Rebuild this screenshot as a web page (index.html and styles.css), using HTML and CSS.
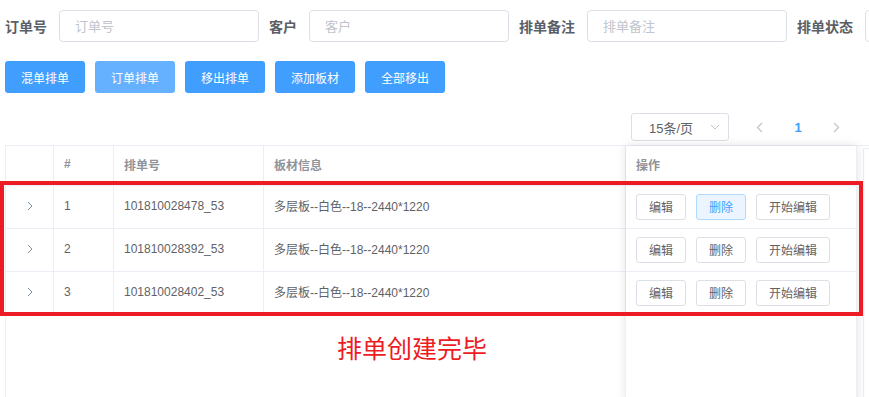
FILE: index.html
```html
<!DOCTYPE html>
<html>
<head>
    <title>排单管理</title>
    <link rel="stylesheet" href="styles.css">
</head>
<body>
    <div class="page">
        <div class="filter-bar">
            <div class="filter-item">
                <label>订单号</label>
                <input class="filter-input" type="text" placeholder="订单号">
            </div>
            <div class="filter-item">
                <label>客户</label>
                <input class="filter-input" type="text" placeholder="客户">
            </div>
            <div class="filter-item">
                <label>排单备注</label>
                <input class="filter-input" type="text" placeholder="排单备注">
            </div>
            <div class="filter-item">
                <label>排单状态</label>
                <input class="filter-input" type="text" placeholder="请选择">
            </div>
        </div>

        <div class="actions">
            <button class="button">混单排单</button>
            <button class="button button-hover">订单排单</button>
            <button class="button">移出排单</button>
            <button class="button">添加板材</button>
            <button class="button">全部移出</button>
        </div>

        <div class="pager-bar">
            <div class="page-size">
                <span>15条/页</span>
                <svg width="10" height="6" viewBox="0 0 10 6"><polyline points="1,1 5,5 9,1" fill="none" stroke="#c0c4cc" stroke-width="1"/></svg>
            </div>
            <button class="pager-btn">
                <svg width="7" height="11" viewBox="0 0 7 11"><polyline points="6,1 1.5,5.5 6,10" fill="none" stroke="#c0c4cc" stroke-width="1.3"/></svg>
            </button>
            <span class="pager-num">1</span>
            <button class="pager-btn">
                <svg width="7" height="11" viewBox="0 0 7 11"><polyline points="1,1 5.5,5.5 1,10" fill="none" stroke="#c0c4cc" stroke-width="1.3"/></svg>
            </button>
        </div>

        <div class="table">
            <div class="table-main">
                <div class="row head-row">
                    <div class="cell"></div>
                    <div class="cell">#</div>
                    <div class="cell">排单号</div>
                    <div class="cell">板材信息</div>
                </div>
                <div class="row">
                    <div class="cell expand"><svg width="6" height="10" viewBox="0 0 6 10"><polyline points="1,1 5,5 1,9" fill="none" stroke="#7b8fa3" stroke-width="1"/></svg></div>
                    <div class="cell">1</div>
                    <div class="cell">101810028478_53</div>
                    <div class="cell">多层板--白色--18--2440*1220</div>
                </div>
                <div class="row">
                    <div class="cell expand"><svg width="6" height="10" viewBox="0 0 6 10"><polyline points="1,1 5,5 1,9" fill="none" stroke="#9a8a8a" stroke-width="1"/></svg></div>
                    <div class="cell">2</div>
                    <div class="cell">101810028392_53</div>
                    <div class="cell">多层板--白色--18--2440*1220</div>
                </div>
                <div class="row">
                    <div class="cell expand"><svg width="6" height="10" viewBox="0 0 6 10"><polyline points="1,1 5,5 1,9" fill="none" stroke="#7b8fa3" stroke-width="1"/></svg></div>
                    <div class="cell">3</div>
                    <div class="cell">101810028402_53</div>
                    <div class="cell">多层板--白色--18--2440*1220</div>
                </div>
            </div>

            <div class="table-fixed">
                <div class="fixed-cell head-row">操作</div>
                <div class="fixed-cell">
                    <button class="mini-btn">编辑</button>
                    <button class="mini-btn mini-active">删除</button>
                    <button class="mini-btn">开始编辑</button>
                </div>
                <div class="fixed-cell">
                    <button class="mini-btn">编辑</button>
                    <button class="mini-btn">删除</button>
                    <button class="mini-btn">开始编辑</button>
                </div>
                <div class="fixed-cell">
                    <button class="mini-btn">编辑</button>
                    <button class="mini-btn">删除</button>
                    <button class="mini-btn">开始编辑</button>
                </div>
            </div>

            <div class="table-gutter"></div>
        </div>
    </div>

    <!-- annotation drawn over the screenshot -->
    <div class="mark-box"></div>
    <div class="mark-text">排单创建完毕</div>
</body>
</html>
```

FILE: styles.css
```css
body {
    margin: 0;
    width: 869px;
    height: 397px;
    overflow: hidden;
    position: relative;
    background-color: #ffffff;
    font-family: "Liberation Sans", "Noto Sans CJK SC", sans-serif;
    color: #606266;
}

.page {
    padding: 10px 0 0 5px;
}

.filter-bar {
    display: flex;
    align-items: center;
    white-space: nowrap;
}

.filter-item {
    display: flex;
    align-items: center;
    margin-right: 10px;
    flex-shrink: 0;
}

.filter-item label {
    font-size: 14px;
    font-weight: bold;
    color: #5a5e66;
    padding-right: 12px;
}

.filter-input {
    width: 200px;
    height: 32px;
    box-sizing: border-box;
    border: 1px solid #dcdfe6;
    border-radius: 4px;
    padding: 0 15px;
    font-family: "Liberation Sans", "Noto Sans CJK SC", sans-serif;
    font-size: 13px;
    color: #606266;
    outline: none;
}

.filter-input::placeholder {
    color: #c0c4cc;
}

.actions {
    display: flex;
    gap: 10px;
    margin-top: 19px;
}

.button {
    width: 80px;
    height: 32px;
    background-color: #409eff;
    color: white;
    border: none;
    border-radius: 3px;
    font-family: "Liberation Sans", "Noto Sans CJK SC", sans-serif;
    font-size: 12px;
    padding: 0;
    cursor: pointer;
}

.button-hover {
    background-color: #66b1ff;
}

.pager-bar {
    display: flex;
    justify-content: flex-end;
    align-items: center;
    height: 28px;
    margin-top: 20px;
    padding-right: 18px;
}

.page-size {
    width: 98px;
    height: 28px;
    box-sizing: border-box;
    border: 1px solid #dcdfe6;
    border-radius: 3px;
    display: flex;
    align-items: center;
    justify-content: space-between;
    padding: 0 8px 0 17px;
    font-size: 13px;
    color: #606266;
    margin-right: 15px;
}

.pager-btn {
    width: 30px;
    height: 28px;
    border: none;
    background: none;
    padding: 0;
    display: flex;
    align-items: center;
    justify-content: center;
}

.pager-num {
    width: 40px;
    margin: 0 3px 0 4px;
    text-align: center;
    font-size: 13px;
    font-weight: bold;
    color: #409eff;
}

.table {
    display: flex;
    height: 260px;
    margin-top: 4px;
    border-top: 1px solid #ebeef5;
    border-left: 1px solid #ebeef5;
    font-size: 12px;
}

.table-main {
    width: 620px;
    flex-shrink: 0;
}

.row {
    display: grid;
    grid-template-columns: 48px 60px 150px 1fr;
    height: 43px;
}

.row.head-row {
    height: 40px;
    color: #909399;
    font-weight: bold;
}

.cell {
    display: flex;
    align-items: center;
    box-sizing: border-box;
    padding-left: 10px;
    padding-bottom: 3px;
    border-right: 1px solid #ebeef5;
    border-bottom: 1px solid #ebeef5;
    white-space: nowrap;
}

.cell.expand {
    justify-content: center;
    padding-left: 0;
}

.table-fixed {
    width: 230px;
    flex-shrink: 0;
    background-color: white;
    border-right: 1px solid #ebeef5;
    box-shadow: 0 0 10px rgba(0, 0, 0, 0.12);
    position: relative;
    z-index: 1;
}

.fixed-cell {
    height: 43px;
    box-sizing: border-box;
    display: flex;
    align-items: center;
    gap: 10px;
    padding-left: 10px;
    padding-bottom: 1px;
    border-bottom: 1px solid #ebeef5;
}

.fixed-cell.head-row {
    height: 40px;
    padding-bottom: 3px;
    color: #909399;
    font-weight: bold;
}

.mini-btn {
    height: 26px;
    padding: 0 12px;
    background-color: white;
    border: 1px solid #dcdfe6;
    border-radius: 3px;
    font-family: "Liberation Sans", "Noto Sans CJK SC", sans-serif;
    font-size: 12px;
    color: #606266;
}

.mini-active {
    background-color: #ecf5ff;
    border-color: #b3d8ff;
    color: #409eff;
}

.table-gutter {
    width: 13px;
    margin-left: 6px;
    margin-top: 2px;
    border-left: 1px solid #ebeef5;
    border-top: 1px solid #ebeef5;
}

.mark-box {
    position: absolute;
    left: 0;
    top: 181px;
    width: 863px;
    height: 135px;
    box-sizing: border-box;
    border: 4px solid #ed1c24;
    z-index: 2;
}

.mark-text {
    position: absolute;
    left: 337px;
    top: 331px;
    font-family: "Noto Sans CJK SC", sans-serif;
    font-size: 25px;
    line-height: 32px;
    color: #ed1c24;
    z-index: 2;
}
```
